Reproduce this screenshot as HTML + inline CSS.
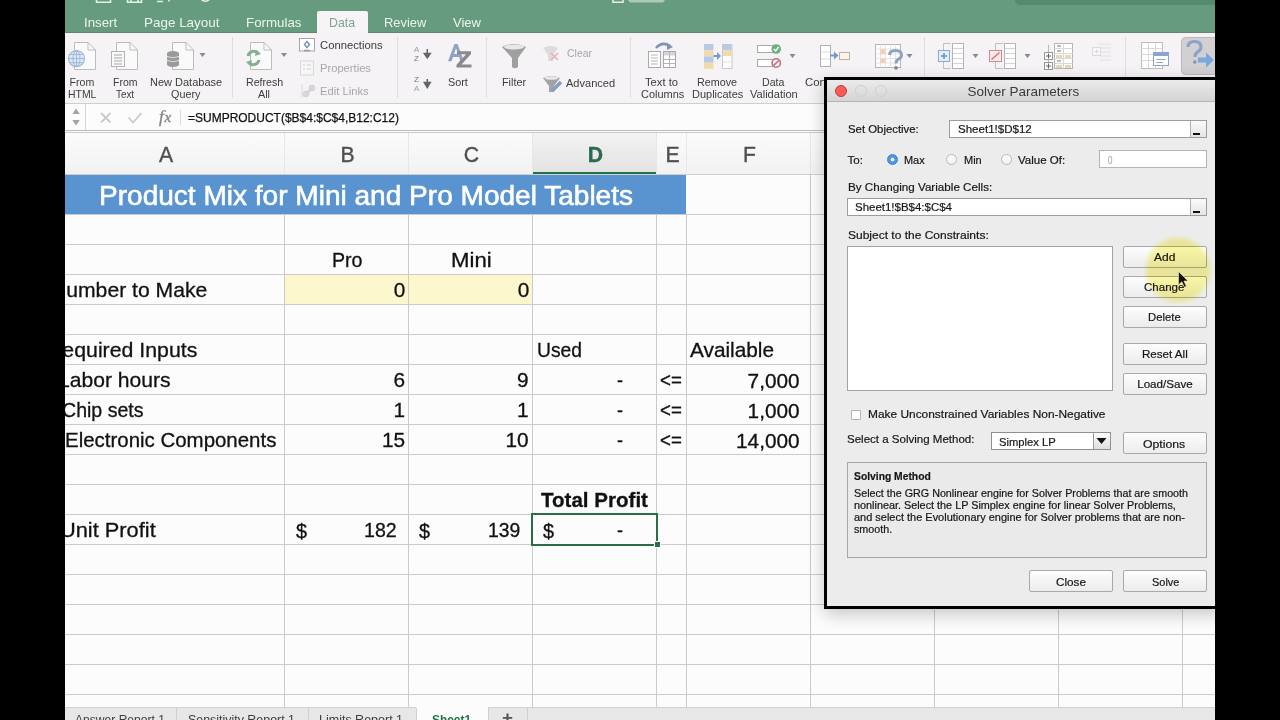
<!DOCTYPE html><html><head><meta charset="utf-8"><title>Solver</title><style>
*{margin:0;padding:0;box-sizing:border-box}
html,body{width:1280px;height:720px;overflow:hidden;background:#000;font-family:"Liberation Sans",sans-serif}
.a{position:absolute}
.t{position:absolute;white-space:nowrap}
</style></head><body>
<div class="a" style="left:65px;top:0px;width:1150px;height:720px;background:#fdfcfd"></div>
<div class="a" style="left:65px;top:0px;width:1150px;height:32px;background:#679b80"></div>
<svg class="a" style="left:65px;top:0px" width="620" height="6" viewBox="0 0 620 6"><g stroke="#e3f0e7" stroke-width="1.6" fill="none"><path d="M31.5 -2V2.2H45.5V-2"/><path d="M62.5 -2V2.2H76.5V-2M66 -2V1.5M73 -2V1.5"/><path d="M92 1.5H98M104 -2V1.5"/><path d="M136 -1Q140 3.5 145 -1"/><path d="M548 -2V2.2H558V-2"/></g><path d="M563 0H600L598 2.5H565Z" fill="#e3f0e7" opacity=".55"/></svg>
<div class="a" style="left:1015px;top:-6px;width:205px;height:11px;background:#578a6d;border-radius:5px"></div>
<div class="a" style="left:317px;top:11px;width:51px;height:22px;background:#f6f4f6;border-radius:2px 2px 0 0"></div>
<div class="t" style="left:84.40px;top:16.00px;font-size:13.00px;line-height:13.00px;color:#eaf6ee;transform:scaleX(1.0185);transform-origin:0 0">Insert</div>
<div class="t" style="left:144.00px;top:16.00px;font-size:13.00px;line-height:13.00px;color:#eaf6ee;transform:scaleX(1.0343);transform-origin:0 0">Page Layout</div>
<div class="t" style="left:246.00px;top:16.00px;font-size:13.00px;line-height:13.00px;color:#eaf6ee;transform:scaleX(1.0238);transform-origin:0 0">Formulas</div>
<div class="t" style="left:329.00px;top:16.00px;font-size:13.00px;line-height:13.00px;color:#7fa490;transform:scaleX(0.9456);transform-origin:0 0">Data</div>
<div class="t" style="left:383.80px;top:16.00px;font-size:13.00px;line-height:13.00px;color:#eaf6ee;transform:scaleX(0.9897);transform-origin:0 0">Review</div>
<div class="t" style="left:453.00px;top:16.00px;font-size:13.00px;line-height:13.00px;color:#eaf6ee">View</div>
<div class="a" style="left:65px;top:32px;width:1150px;height:71px;background:#f5f3f5"></div>
<div class="a" style="left:65px;top:103px;width:1150px;height:1px;background:#cfcdcf"></div>
<div class="a" style="left:65px;top:32px;width:1150px;height:1px;background:#6f7d72"></div>
<div class="a" style="left:65px;top:33px;width:1150px;height:1px;background:#eef6f0"></div>
<div class="a" style="left:317px;top:32px;width:51px;height:3px;background:#f6f4f6"></div>
<div class="a" style="left:232px;top:37px;width:1px;height:61px;background:#dfdddf"></div>
<div class="a" style="left:397px;top:37px;width:1px;height:61px;background:#dfdddf"></div>
<div class="a" style="left:486px;top:37px;width:1px;height:61px;background:#dfdddf"></div>
<div class="a" style="left:630px;top:37px;width:1px;height:61px;background:#dfdddf"></div>
<div class="a" style="left:924px;top:37px;width:1px;height:61px;background:#dfdddf"></div>
<div class="a" style="left:1125px;top:37px;width:1px;height:61px;background:#dfdddf"></div>
<div class="t" style="left:69.50px;top:76.63px;font-size:10.60px;line-height:10.60px;color:#3d3d3d">From</div>
<div class="t" style="left:68.20px;top:88.63px;font-size:10.60px;line-height:10.60px;color:#3d3d3d;transform:scaleX(0.9850);transform-origin:0 0">HTML</div>
<div class="t" style="left:112.70px;top:76.63px;font-size:10.60px;line-height:10.60px;color:#3d3d3d;transform:scaleX(0.9899);transform-origin:0 0">From</div>
<div class="t" style="left:116.40px;top:88.63px;font-size:10.60px;line-height:10.60px;color:#3d3d3d;transform:scaleX(0.9305);transform-origin:0 0">Text</div>
<div class="t" style="left:149.75px;top:76.63px;font-size:10.60px;line-height:10.60px;color:#3d3d3d;transform:scaleX(1.0376);transform-origin:0 0">New Database</div>
<div class="t" style="left:170.60px;top:88.63px;font-size:10.60px;line-height:10.60px;color:#3d3d3d;transform:scaleX(1.0178);transform-origin:0 0">Query</div>
<div class="t" style="left:245.60px;top:76.63px;font-size:10.60px;line-height:10.60px;color:#3d3d3d;transform:scaleX(1.0054);transform-origin:0 0">Refresh</div>
<div class="t" style="left:258.00px;top:88.63px;font-size:10.60px;line-height:10.60px;color:#3d3d3d;transform:scaleX(1.0199);transform-origin:0 0">All</div>
<div class="t" style="left:320.30px;top:40.03px;font-size:10.60px;line-height:10.60px;color:#3d3d3d;transform:scaleX(1.0639);transform-origin:0 0">Connections</div>
<div class="t" style="left:320.30px;top:62.83px;font-size:10.60px;line-height:10.60px;color:#a8a8a8;transform:scaleX(1.0551);transform-origin:0 0">Properties</div>
<div class="t" style="left:320.30px;top:86.03px;font-size:10.60px;line-height:10.60px;color:#a8a8a8;transform:scaleX(1.0598);transform-origin:0 0">Edit Links</div>
<div class="t" style="left:448.30px;top:76.73px;font-size:10.60px;line-height:10.60px;color:#3d3d3d;transform:scaleX(1.0231);transform-origin:0 0">Sort</div>
<div class="t" style="left:501.50px;top:76.93px;font-size:10.60px;line-height:10.60px;color:#3d3d3d;transform:scaleX(1.0199);transform-origin:0 0">Filter</div>
<div class="t" style="left:566.60px;top:47.93px;font-size:10.60px;line-height:10.60px;color:#a8a8a8;transform:scaleX(0.9908);transform-origin:0 0">Clear</div>
<div class="t" style="left:566.00px;top:78.03px;font-size:10.60px;line-height:10.60px;color:#3d3d3d;transform:scaleX(1.0430);transform-origin:0 0">Advanced</div>
<div class="t" style="left:645.40px;top:76.63px;font-size:10.60px;line-height:10.60px;color:#3d3d3d;transform:scaleX(1.0571);transform-origin:0 0">Text to</div>
<div class="t" style="left:640.50px;top:88.63px;font-size:10.60px;line-height:10.60px;color:#3d3d3d;transform:scaleX(1.0355);transform-origin:0 0">Columns</div>
<div class="t" style="left:697.40px;top:76.63px;font-size:10.60px;line-height:10.60px;color:#3d3d3d;transform:scaleX(1.0156);transform-origin:0 0">Remove</div>
<div class="t" style="left:691.80px;top:88.63px;font-size:10.60px;line-height:10.60px;color:#3d3d3d;transform:scaleX(1.0363);transform-origin:0 0">Duplicates</div>
<div class="t" style="left:762.10px;top:76.63px;font-size:10.60px;line-height:10.60px;color:#3d3d3d;transform:scaleX(1.0036);transform-origin:0 0">Data</div>
<div class="t" style="left:749.50px;top:88.63px;font-size:10.60px;line-height:10.60px;color:#3d3d3d;transform:scaleX(1.0439);transform-origin:0 0">Validation</div>
<div class="t" style="left:805.00px;top:76.53px;font-size:10.60px;line-height:10.60px;color:#3d3d3d;transform:scaleX(1.0796);transform-origin:0 0">Con</div>
<svg class="a" style="left:0;top:0" width="1280" height="110" viewBox="0 0 1280 110"><path d="M74.5 42.5 H88.0 L95.5 50.0 V69.5 H74.5 Z" fill="#fbfafb" stroke="#bdbdbd" stroke-width="1"/><path d="M88.0 42.5 V50.0 H95.5" fill="none" stroke="#bdbdbd" stroke-width="1"/><circle cx="76.5" cy="58.6" r="8" fill="#dfe8f5" stroke="#9fb8dc" stroke-width="1.2"/><path d="M68.5 58.6H84.5M76.5 50.6V66.6M70 54.5H83M70 62.7H83" stroke="#9fb8dc" stroke-width="1"/><ellipse cx="76.5" cy="58.6" rx="3.5" ry="8" fill="none" stroke="#9fb8dc" stroke-width="1"/><path d="M116.5 42.5 H130.0 L137.5 50.0 V69.5 H116.5 Z" fill="#fbfafb" stroke="#bdbdbd" stroke-width="1"/><path d="M130.0 42.5 V50.0 H137.5" fill="none" stroke="#bdbdbd" stroke-width="1"/><rect x="111.5" y="51.5" width="13" height="15" fill="#fbfafb" stroke="#b3b3b3"/><path d="M114 55H122M114 58H122M114 61H122M114 64H122" stroke="#a5a5a5" stroke-width="1"/><path d="M172.5 42.5 H186.0 L193.5 50.0 V69.5 H172.5 Z" fill="#fbfafb" stroke="#bdbdbd" stroke-width="1"/><path d="M186.0 42.5 V50.0 H193.5" fill="none" stroke="#bdbdbd" stroke-width="1"/><g fill="#9a9a9a"><ellipse cx="173" cy="53.5" rx="6" ry="2.5"/><rect x="167" y="53.5" width="12" height="3"/><ellipse cx="173" cy="57.5" rx="6" ry="2.5"/><rect x="167" y="57.5" width="12" height="3"/><ellipse cx="173" cy="61.5" rx="6" ry="2.5"/><rect x="167" y="61.5" width="12" height="3"/><ellipse cx="173" cy="64.5" rx="6" ry="2.5"/></g><path d="M167 56.5Q173 59 179 56.5M167 60.5Q173 63 179 60.5" stroke="#eee" stroke-width=".8" fill="none"/><path d="M199.5 53H205.5L202.5 57Z" fill="#8a8a8a"/><path d="M250.5 42.5 H264.0 L271.5 50.0 V69.5 H250.5 Z" fill="#fbfafb" stroke="#bdbdbd" stroke-width="1"/><path d="M264.0 42.5 V50.0 H271.5" fill="none" stroke="#bdbdbd" stroke-width="1"/><path d="M248 56A6 6 0 0 1 258.5 53.5" stroke="#86b08f" stroke-width="3" fill="none"/><path d="M256 50L261 54L255 56Z" fill="#86b08f"/><path d="M259 60A6 6 0 0 1 248.5 62.5" stroke="#86b08f" stroke-width="3" fill="none"/><path d="M251 66L246 62L252 60Z" fill="#86b08f"/><path d="M281 53H287L284 57Z" fill="#8a8a8a"/><rect x="299.5" y="38.5" width="15" height="12.5" fill="#fff" stroke="#a5a5a5"/><path d="M304 50.5H310" stroke="#999" stroke-width="1.5"/><path d="M307 41.5L309.5 44.5L307 47.5L304.5 44.5Z" fill="none" stroke="#7f97bb" stroke-width="1.5"/><rect x="300.5" y="61" width="13" height="14" fill="#f7f6f7" stroke="#d8d8d8"/><path d="M303 65H305M307 65H311M303 69H305M307 69H311" stroke="#d0d0d0" stroke-width="1"/><path d="M302 84V98" stroke="#dcdcdc"/><path d="M305 95L313 87" stroke="#d3d3d3" stroke-width="2.5"/><circle cx="306" cy="94" r="2.5" fill="none" stroke="#d3d3d3" stroke-width="1.5"/><circle cx="312" cy="88" r="2.5" fill="none" stroke="#d3d3d3" stroke-width="1.5"/><text x="414" y="51.7" font-size="8" fill="#8f9fb8" font-family="Liberation Sans">A</text><text x="414" y="60.7" font-size="8" fill="#777" font-family="Liberation Sans">Z</text><path d="M427.3 49V56M424.3 53.5L427.3 58L430.3 53.5Z" stroke="#666" stroke-width="1.5" fill="#666"/><text x="414" y="81.5" font-size="8" fill="#777" font-family="Liberation Sans">Z</text><text x="414" y="90.5" font-size="8" fill="#8f9fb8" font-family="Liberation Sans">A</text><path d="M427.3 79V86M424.3 82.5L427.3 87.5L430.3 82.5Z" stroke="#666" stroke-width="1.5" fill="#666"/><path d="M448 61.2L454.5 44H457.5L464 61.2H460.5L459 57H453L451.5 61.2ZM454 54H458L456 48Z" fill="#8ea3c3"/><path d="M457 51.3H471V54L461.5 64.5H471.5V67.5H456.5V64.8L466 54.3H457Z" fill="#8a8a8a"/><path d="M502 47Q514 41 526 47L518 58V67Q515 69.5 512 67V58Z" fill="#a0a0a0"/><ellipse cx="514" cy="47" rx="10" ry="2.6" fill="#e8e8e8"/><path d="M543 48Q550.5 44 558 48L553 55V61H548V55Z" fill="#dcdcdc"/><path d="M551 53L558 60M558 53L551 60" stroke="#eab0b0" stroke-width="1.6"/><path d="M543 78Q551.5 74 560 78L554 86V92H549V86Z" fill="#a3a3a3"/><ellipse cx="551.5" cy="78" rx="7" ry="1.8" fill="#e6e6e6"/><path d="M552 91L561 82" stroke="#7fa0cf" stroke-width="3.5"/><path d="M656 48Q662 41 670 46" stroke="#7f93b5" stroke-width="2.5" fill="none"/><path d="M667 43L673 47L667 50Z" fill="#7f93b5"/><rect x="648.5" y="51.5" width="12" height="16" fill="#fff" stroke="#a9a9a9"/><path d="M651 55H658M651 58H658M651 61H658M651 64H658" stroke="#b5b5b5"/><rect x="663.5" y="51.5" width="12" height="16" fill="#fff" stroke="#a9a9a9"/><rect x="664" y="52" width="11" height="3.5" fill="#d5d5d5"/><path d="M669.5 52V67M664 59.5H675M664 63.5H675" stroke="#b5b5b5"/><rect x="704" y="44" width="9.5" height="6.2" fill="#b7c9e6"/><rect x="704" y="50.2" width="9.5" height="6.2" fill="#f0dca8"/><rect x="704" y="56.4" width="9.5" height="6.2" fill="#b7c9e6"/><rect x="704" y="62.6" width="9.5" height="6.2" fill="#f0dca8"/><path d="M713.5 56H718" stroke="#6f9bd3" stroke-width="2"/><path d="M717 52L721 56L717 60Z" fill="#6f9bd3"/><rect x="722.5" y="44.5" width="9.5" height="24" fill="#fff" stroke="#c8c8c8"/><rect x="723" y="45" width="8.5" height="5.5" fill="#b7c9e6"/><rect x="723" y="50.5" width="8.5" height="5.5" fill="#f0dca8"/><path d="M723 62H731.5" stroke="#e0e0e0"/><rect x="757.5" y="45.5" width="18" height="7" fill="#fff" stroke="#aaa"/><circle cx="776.2" cy="49" r="4.8" fill="#6fb07a"/><path d="M773.8 49L775.6 51L778.6 47" stroke="#fff" stroke-width="1.3" fill="none"/><rect x="757.5" y="59.5" width="18" height="7" fill="#fff" stroke="#aaa"/><circle cx="776.2" cy="63" r="4.2" fill="#fff" stroke="#c76b7c" stroke-width="1.6"/><path d="M773.6 65.4L778.8 60.6" stroke="#c76b7c" stroke-width="1.5"/><path d="M789.5 54H795.5L792.5 58Z" fill="#8a8a8a"/><rect x="820.5" y="45.5" width="10" height="21" fill="#fff" stroke="#b0b0b0"/><path d="M821 52H830M821 59H830" stroke="#ddd"/><path d="M830 55.5H835" stroke="#7099cf" stroke-width="2"/><path d="M834 51.5L838.5 55.5L834 59.5Z" fill="#7099cf"/><rect x="839.5" y="52.5" width="10" height="7" fill="#fdf3ea" stroke="#c0b0a0"/><rect x="875.5" y="44.5" width="25" height="23" fill="#fff" stroke="#b5b5b5"/><path d="M880.5 44.5V67.5M885.5 44.5V67.5M890.5 44.5V67.5M895.5 44.5V67.5M875.5 49H900.5M875.5 54H900.5M875.5 58.5H900.5M875.5 63H900.5" stroke="#dedede" stroke-width=".8"/><rect x="880.5" y="49" width="5" height="5" fill="#f3d0b5"/><rect x="880.5" y="58.5" width="5" height="4.5" fill="#f3d0b5"/><path d="M889.5 55Q889.5 50.5 895.5 50.5Q901.5 50.5 901.5 55Q901.5 58 898 59.5Q896 60.5 896 63.5" stroke="#8ea3c3" stroke-width="3" fill="none"/><circle cx="896" cy="67.8" r="1.9" fill="#8a8a8a"/><path d="M906.5 54H912.5L909.5 58Z" fill="#8a8a8a"/><path d="M943.5 43.5V68.5H950.5" fill="none" stroke="#c0c0c0"/><path d="M943.5 43.5H950.5" stroke="#c0c0c0"/><rect x="952.5" y="43.5" width="11" height="25" fill="#fff" stroke="#b5b5b5"/><path d="M953 48.5H963M953 53.5H963M953 58.5H963M953 63.5H963" stroke="#d5d5d5"/><rect x="938.5" y="50.5" width="11" height="11" fill="#e3eefa" stroke="#89a9d3"/><path d="M944 53V59M941 56H947" stroke="#6e92c5" stroke-width="1.5"/><path d="M972.5 54H978.5L975.5 58Z" fill="#8a8a8a"/><path d="M995.5 43.5V68.5H1003" fill="none" stroke="#c0c0c0"/><path d="M995.5 43.5H1003" stroke="#c0c0c0"/><rect x="1004.5" y="43.5" width="11" height="25" fill="#fff" stroke="#b5b5b5"/><path d="M1005 48.5H1015M1005 53.5H1015M1005 58.5H1015M1005 63.5H1015" stroke="#d5d5d5"/><rect x="989.5" y="50.5" width="12" height="11" fill="#fbeaea" stroke="#d58a8a"/><path d="M991.5 59.5L999.5 52.5" stroke="#d06b6b" stroke-width="1.3"/><path d="M1024.5 54H1030.5L1027.5 58Z" fill="#8a8a8a"/><rect x="1054.5" y="43.5" width="18" height="25" fill="#fff" stroke="#b5b5b5"/><path d="M1063.5 43.5V68.5M1054.5 48.5H1072.5M1054.5 53.5H1072.5M1054.5 58.5H1072.5M1054.5 63.5H1072.5" stroke="#d8d8d8"/><path d="M1057 46H1061M1057 51H1061M1057 61H1061" stroke="#777" stroke-width="1"/><rect x="1056" y="55" width="6" height="3" fill="#e8d6b8"/><rect x="1065" y="55" width="6" height="3" fill="#e8d6b8"/><rect x="1056" y="65" width="6" height="3" fill="#e8d6b8"/><rect x="1065" y="65" width="6" height="3" fill="#e8d6b8"/><path d="M1048.5 45V52M1048.5 59V62" stroke="#bbb"/><rect x="1044.5" y="52.5" width="8" height="7" fill="#fff" stroke="#999"/><rect x="1044.5" y="62.5" width="8" height="7" fill="#fff" stroke="#999"/><path d="M1046 56H1051M1048.5 53.5V58.5M1046 66H1051M1048.5 63.5V68.5" stroke="#666"/><path d="M1098 44H1111M1100 48H1111M1100 52H1111M1100 56H1111M1100 60H1111" stroke="#e2e2e2"/><rect x="1092.5" y="47.5" width="8" height="8" fill="#f8f8f8" stroke="#dadada"/><path d="M1094.5 51.5H1098.5M1096.5 49.5V53.5" stroke="#d5d5d5"/><rect x="1141.5" y="42.5" width="21" height="26" fill="#fff" stroke="#bdbdbd"/><path d="M1141.5 48.5H1162.5M1141.5 54.5H1162.5M1141.5 60.5H1162.5M1148.5 42.5V68.5M1155.5 42.5V68.5" stroke="#d8d8d8"/><rect x="1153.5" y="52.5" width="15" height="13" fill="#fff" stroke="#8aa6cf"/><rect x="1154" y="53" width="14" height="3" fill="#8aa6cf"/><path d="M1156.5 59.5H1165.5M1156.5 62.5H1163" stroke="#8aa6cf"/><rect x="1181.5" y="37.5" width="40" height="37" rx="4" fill="#d3d0d3" stroke="#bbb8bb"/><path d="M1188 47Q1188 41.5 1194.5 41.5Q1201 41.5 1201 47Q1201 50 1197.5 52Q1195 53.5 1195 57" stroke="#8ba4ca" stroke-width="3.2" fill="none"/><circle cx="1194.8" cy="62" r="1.8" fill="#8f92a8"/><path d="M1198 57.5H1206V52.5L1214 60L1206 67.5V62.5H1198Z" fill="#78a8e0"/></svg>
<div class="a" style="left:65px;top:104px;width:1150px;height:26px;background:#fdfcfd"></div>
<div class="a" style="left:65px;top:130px;width:1150px;height:1px;background:#bcbcbc"></div>
<div class="a" style="left:65px;top:132px;width:1150px;height:1px;background:#cbcbcb"></div>
<div class="a" style="left:85px;top:104px;width:1px;height:26px;background:#d3d3d3"></div>
<svg class="a" style="left:65px;top:103px" width="120" height="28" viewBox="0 0 120 28"><path d="M7.4 11L11 5.5L14.8 11Z" fill="#a5a5a5"/><path d="M7.4 17L11 22.5L14.8 17Z" fill="#a5a5a5"/><path d="M36 10L45.5 19.5M45.5 10L36 19.5" stroke="#c9c9c9" stroke-width="1.8"/><path d="M63.5 14.5L68 19.5L76.5 10" stroke="#c9c9c9" stroke-width="1.8" fill="none"/><text x="94" y="18.8" font-family="Liberation Serif" font-style="italic" font-size="17" fill="#858585" stroke="#858585" stroke-width=".35">f</text><text x="99.5" y="18.8" font-family="Liberation Serif" font-style="italic" font-size="15" fill="#858585" stroke="#858585" stroke-width=".35">x</text></svg>
<div class="a" style="left:180px;top:110px;width:1px;height:15px;background:#dadada"></div>
<div class="t" style="left:188.00px;top:112.13px;font-size:12.60px;line-height:12.60px;color:#111;transform:scaleX(0.9520);transform-origin:0 0;-webkit-text-stroke:0.25px #111">=SUMPRODUCT($B$4:$C$4,B12:C12)</div>
<div class="a" style="left:65px;top:133px;width:1150px;height:41px;background:linear-gradient(#fcfbfc,#f3f2f3)"></div>
<div class="a" style="left:532px;top:133px;width:124px;height:41px;background:linear-gradient(#f4f3f4,#e3e2e3)"></div>
<div class="a" style="left:532px;top:172px;width:124px;height:2px;background:#217346"></div>
<div class="t" style="left:45px;top:143px;width:239px;text-align:center;font-size:21.2px;padding-left:3px;line-height:24px;-webkit-text-stroke:0.35px currentColor;color:#4f4f4f">A</div>
<div class="t" style="left:284px;top:143px;width:124px;text-align:center;font-size:21.2px;padding-left:3px;line-height:24px;-webkit-text-stroke:0.35px currentColor;color:#4f4f4f">B</div>
<div class="t" style="left:408px;top:143px;width:124px;text-align:center;font-size:21.2px;padding-left:3px;line-height:24px;-webkit-text-stroke:0.35px currentColor;color:#4f4f4f">C</div>
<div class="t" style="left:532px;top:143px;width:124px;text-align:center;font-size:21.2px;padding-left:3px;line-height:24px;-webkit-text-stroke:0.35px currentColor;color:#2a6b4f;font-weight:bold">D</div>
<div class="t" style="left:656px;top:143px;width:30px;text-align:center;font-size:21.2px;padding-left:3px;line-height:24px;-webkit-text-stroke:0.35px currentColor;color:#4f4f4f">E</div>
<div class="t" style="left:686px;top:143px;width:124px;text-align:center;font-size:21.2px;padding-left:3px;line-height:24px;-webkit-text-stroke:0.35px currentColor;color:#4f4f4f">F</div>
<div class="t" style="left:810px;top:143px;width:124px;text-align:center;font-size:21.2px;padding-left:3px;line-height:24px;-webkit-text-stroke:0.35px currentColor;color:#4f4f4f">G</div>
<div class="t" style="left:934px;top:143px;width:124px;text-align:center;font-size:21.2px;padding-left:3px;line-height:24px;-webkit-text-stroke:0.35px currentColor;color:#4f4f4f">H</div>
<div class="t" style="left:1058px;top:143px;width:124px;text-align:center;font-size:21.2px;padding-left:3px;line-height:24px;-webkit-text-stroke:0.35px currentColor;color:#4f4f4f">I</div>
<div class="t" style="left:1182px;top:143px;width:124px;text-align:center;font-size:21.2px;padding-left:3px;line-height:24px;-webkit-text-stroke:0.35px currentColor;color:#4f4f4f">J</div>
<div class="a" style="left:284px;top:133px;width:1px;height:41px;background:#e9e7e9"></div>
<div class="a" style="left:408px;top:133px;width:1px;height:41px;background:#e9e7e9"></div>
<div class="a" style="left:532px;top:133px;width:1px;height:41px;background:#e9e7e9"></div>
<div class="a" style="left:656px;top:133px;width:1px;height:41px;background:#e9e7e9"></div>
<div class="a" style="left:686px;top:133px;width:1px;height:41px;background:#e9e7e9"></div>
<div class="a" style="left:810px;top:133px;width:1px;height:41px;background:#e9e7e9"></div>
<div class="a" style="left:934px;top:133px;width:1px;height:41px;background:#e9e7e9"></div>
<div class="a" style="left:1058px;top:133px;width:1px;height:41px;background:#e9e7e9"></div>
<div class="a" style="left:1182px;top:133px;width:1px;height:41px;background:#e9e7e9"></div>
<div class="a" style="left:65px;top:174px;width:1150px;height:1px;background:#cfcfcf"></div>
<div class="a" style="left:65px;top:214px;width:1150px;height:1px;background:#cccacd"></div>
<div class="a" style="left:65px;top:244px;width:1150px;height:1px;background:#cccacd"></div>
<div class="a" style="left:65px;top:274px;width:1150px;height:1px;background:#cccacd"></div>
<div class="a" style="left:65px;top:304px;width:1150px;height:1px;background:#cccacd"></div>
<div class="a" style="left:65px;top:334px;width:1150px;height:1px;background:#cccacd"></div>
<div class="a" style="left:65px;top:364px;width:1150px;height:1px;background:#cccacd"></div>
<div class="a" style="left:65px;top:394px;width:1150px;height:1px;background:#cccacd"></div>
<div class="a" style="left:65px;top:424px;width:1150px;height:1px;background:#cccacd"></div>
<div class="a" style="left:65px;top:454px;width:1150px;height:1px;background:#cccacd"></div>
<div class="a" style="left:65px;top:484px;width:1150px;height:1px;background:#cccacd"></div>
<div class="a" style="left:65px;top:514px;width:1150px;height:1px;background:#cccacd"></div>
<div class="a" style="left:65px;top:544px;width:1150px;height:1px;background:#cccacd"></div>
<div class="a" style="left:65px;top:574px;width:1150px;height:1px;background:#cccacd"></div>
<div class="a" style="left:65px;top:604px;width:1150px;height:1px;background:#cccacd"></div>
<div class="a" style="left:65px;top:634px;width:1150px;height:1px;background:#cccacd"></div>
<div class="a" style="left:65px;top:664px;width:1150px;height:1px;background:#cccacd"></div>
<div class="a" style="left:65px;top:694px;width:1150px;height:1px;background:#cccacd"></div>
<div class="a" style="left:284px;top:214px;width:1px;height:493px;background:#cccacd"></div>
<div class="a" style="left:408px;top:214px;width:1px;height:493px;background:#cccacd"></div>
<div class="a" style="left:532px;top:214px;width:1px;height:493px;background:#cccacd"></div>
<div class="a" style="left:656px;top:214px;width:1px;height:493px;background:#cccacd"></div>
<div class="a" style="left:686px;top:214px;width:1px;height:493px;background:#cccacd"></div>
<div class="a" style="left:810px;top:214px;width:1px;height:493px;background:#cccacd"></div>
<div class="a" style="left:934px;top:214px;width:1px;height:493px;background:#cccacd"></div>
<div class="a" style="left:1058px;top:214px;width:1px;height:493px;background:#cccacd"></div>
<div class="a" style="left:1182px;top:214px;width:1px;height:493px;background:#cccacd"></div>
<div class="a" style="left:810px;top:174px;width:1px;height:40px;background:#cccacd"></div>
<div class="a" style="left:934px;top:174px;width:1px;height:40px;background:#cccacd"></div>
<div class="a" style="left:1058px;top:174px;width:1px;height:40px;background:#cccacd"></div>
<div class="a" style="left:1182px;top:174px;width:1px;height:40px;background:#cccacd"></div>
<div class="a" style="left:65px;top:175px;width:621px;height:39px;background:#5994d0"></div>
<div class="t" style="left:99.00px;top:182.22px;font-size:27.50px;line-height:27.50px;color:#ffffff;transform:scaleX(1.0196);transform-origin:0 0;-webkit-text-stroke:0.6px #fff">Product Mix for Mini and Pro Model Tablets</div>
<div class="a" style="left:285px;top:275px;width:123px;height:29px;background:#fdf7cd"></div>
<div class="a" style="left:409px;top:275px;width:123px;height:29px;background:#fdf7cd"></div>
<div class="t" style="left:331.80px;top:250.29px;font-size:20.80px;line-height:20.80px;color:#111;transform:scaleX(0.9430);transform-origin:0 0;-webkit-text-stroke:0.3px #111">Pro</div>
<div class="t" style="left:451.20px;top:250.29px;font-size:20.80px;line-height:20.80px;color:#111;transform:scaleX(1.0663);transform-origin:0 0;-webkit-text-stroke:0.3px #111">Mini</div>
<div class="t" style="left:393.76px;top:280.29px;font-size:20.80px;line-height:20.80px;color:#111;-webkit-text-stroke:0.3px #111">0</div>
<div class="t" style="left:517.66px;top:280.29px;font-size:20.80px;line-height:20.80px;color:#111;-webkit-text-stroke:0.3px #111">0</div>
<div class="t" style="left:51.08px;top:279.79px;font-size:20.80px;line-height:20.80px;color:#111;transform:scaleX(1.0163);transform-origin:0 0;-webkit-text-stroke:0.3px #111">Number to Make</div>
<div class="t" style="left:46.50px;top:339.79px;font-size:20.80px;line-height:20.80px;color:#111;transform:scaleX(1.0235);transform-origin:0 0;-webkit-text-stroke:0.3px #111">Required Inputs</div>
<div class="t" style="left:536.70px;top:339.79px;font-size:20.80px;line-height:20.80px;color:#111;transform:scaleX(0.9265);transform-origin:0 0;-webkit-text-stroke:0.3px #111">Used</div>
<div class="t" style="left:690.00px;top:339.79px;font-size:20.80px;line-height:20.80px;color:#111;-webkit-text-stroke:0.3px #111">Available</div>
<div class="t" style="left:57.78px;top:369.79px;font-size:20.80px;line-height:20.80px;color:#111;transform:scaleX(1.0148);transform-origin:0 0;-webkit-text-stroke:0.3px #111">Labor hours</div>
<div class="t" style="left:393.46px;top:369.79px;font-size:20.80px;line-height:20.80px;color:#111;-webkit-text-stroke:0.3px #111">6</div>
<div class="t" style="left:517.06px;top:369.79px;font-size:20.80px;line-height:20.80px;color:#111;-webkit-text-stroke:0.3px #111">9</div>
<div class="t" style="left:616.70px;top:369.79px;font-size:20.80px;line-height:20.80px;color:#111;transform:scaleX(0.8611);transform-origin:0 0;-webkit-text-stroke:0.3px #111">-</div>
<div class="t" style="left:660.30px;top:369.79px;font-size:20.80px;line-height:20.80px;color:#111;transform:scaleX(0.8999);transform-origin:0 0;-webkit-text-stroke:0.3px #111">&lt;=</div>
<div class="t" style="left:747.60px;top:370.79px;font-size:20.80px;line-height:20.80px;color:#111;-webkit-text-stroke:0.3px #111">7,000</div>
<div class="t" style="left:61.82px;top:399.79px;font-size:20.80px;line-height:20.80px;color:#111;transform:scaleX(0.9406);transform-origin:0 0;-webkit-text-stroke:0.3px #111">Chip sets</div>
<div class="t" style="left:393.46px;top:399.79px;font-size:20.80px;line-height:20.80px;color:#111;-webkit-text-stroke:0.3px #111">1</div>
<div class="t" style="left:517.06px;top:399.79px;font-size:20.80px;line-height:20.80px;color:#111;-webkit-text-stroke:0.3px #111">1</div>
<div class="t" style="left:616.70px;top:399.79px;font-size:20.80px;line-height:20.80px;color:#111;transform:scaleX(0.8611);transform-origin:0 0;-webkit-text-stroke:0.3px #111">-</div>
<div class="t" style="left:660.30px;top:399.79px;font-size:20.80px;line-height:20.80px;color:#111;transform:scaleX(0.8999);transform-origin:0 0;-webkit-text-stroke:0.3px #111">&lt;=</div>
<div class="t" style="left:747.60px;top:400.79px;font-size:20.80px;line-height:20.80px;color:#111;-webkit-text-stroke:0.3px #111">1,000</div>
<div class="t" style="left:65.05px;top:429.79px;font-size:20.80px;line-height:20.80px;color:#111;transform:scaleX(0.9832);transform-origin:0 0;-webkit-text-stroke:0.3px #111">Electronic Components</div>
<div class="t" style="left:381.91px;top:429.79px;font-size:20.80px;line-height:20.80px;color:#111;-webkit-text-stroke:0.3px #111">15</div>
<div class="t" style="left:505.51px;top:429.79px;font-size:20.80px;line-height:20.80px;color:#111;-webkit-text-stroke:0.3px #111">10</div>
<div class="t" style="left:616.70px;top:429.79px;font-size:20.80px;line-height:20.80px;color:#111;transform:scaleX(0.8611);transform-origin:0 0;-webkit-text-stroke:0.3px #111">-</div>
<div class="t" style="left:660.30px;top:429.79px;font-size:20.80px;line-height:20.80px;color:#111;transform:scaleX(0.8999);transform-origin:0 0;-webkit-text-stroke:0.3px #111">&lt;=</div>
<div class="t" style="left:736.05px;top:430.79px;font-size:20.80px;line-height:20.80px;color:#111;-webkit-text-stroke:0.3px #111">14,000</div>
<div class="t" style="left:541.00px;top:489.79px;font-size:20.80px;line-height:20.80px;color:#111;font-weight:bold;transform:scaleX(0.9883);transform-origin:0 0;-webkit-text-stroke:0.3px #111">Total Profit</div>
<div class="t" style="left:60.31px;top:519.79px;font-size:20.80px;line-height:20.80px;color:#111;transform:scaleX(1.0480);transform-origin:0 0;-webkit-text-stroke:0.3px #111">Unit Profit</div>
<div class="t" style="left:295.70px;top:520.79px;font-size:20.80px;line-height:20.80px;color:#111;transform:scaleX(0.9529);transform-origin:0 0;-webkit-text-stroke:0.3px #111">$</div>
<div class="t" style="left:364.00px;top:519.79px;font-size:20.80px;line-height:20.80px;color:#111;transform:scaleX(0.9414);transform-origin:0 0;-webkit-text-stroke:0.3px #111">182</div>
<div class="t" style="left:419.00px;top:520.79px;font-size:20.80px;line-height:20.80px;color:#111;transform:scaleX(0.9529);transform-origin:0 0;-webkit-text-stroke:0.3px #111">$</div>
<div class="t" style="left:488.00px;top:519.79px;font-size:20.80px;line-height:20.80px;color:#111;transform:scaleX(0.9299);transform-origin:0 0;-webkit-text-stroke:0.3px #111">139</div>
<div class="t" style="left:542.80px;top:520.79px;font-size:20.80px;line-height:20.80px;color:#111;transform:scaleX(0.9529);transform-origin:0 0;-webkit-text-stroke:0.3px #111">$</div>
<div class="t" style="left:616.70px;top:519.79px;font-size:20.80px;line-height:20.80px;color:#111;transform:scaleX(0.8611);transform-origin:0 0;-webkit-text-stroke:0.3px #111">-</div>
<div class="a" style="left:531px;top:513px;width:127px;height:33px;border:2px solid #2a6e49"></div>
<div class="a" style="left:654px;top:541px;width:7px;height:7px;background:#2a6e49;border:1px solid #fff"></div>
<div class="a" style="left:65px;top:707px;width:1150px;height:13px;background:#e8e7e8;border-top:1px solid #d2d2d2"></div>
<div class="a" style="left:416px;top:707px;width:72px;height:13px;background:#fdfcfd"></div>
<div class="a" style="left:176px;top:708px;width:1px;height:12px;background:#d0d0d0"></div>
<div class="a" style="left:308px;top:708px;width:1px;height:12px;background:#d0d0d0"></div>
<div class="a" style="left:416px;top:708px;width:1px;height:12px;background:#d0d0d0"></div>
<div class="a" style="left:488px;top:708px;width:1px;height:12px;background:#d0d0d0"></div>
<div class="a" style="left:527px;top:708px;width:1px;height:12px;background:#d0d0d0"></div>
<div class="t" style="left:75.00px;top:714.42px;font-size:12.50px;line-height:12.50px;color:#3d3d3d;transform:scaleX(0.9664);transform-origin:0 0">Answer Report 1</div>
<div class="t" style="left:188.00px;top:714.42px;font-size:12.50px;line-height:12.50px;color:#3d3d3d;transform:scaleX(0.9936);transform-origin:0 0">Sensitivity Report 1</div>
<div class="t" style="left:319.00px;top:714.42px;font-size:12.50px;line-height:12.50px;color:#3d3d3d">Limits Report 1</div>
<div class="t" style="left:432.00px;top:714.42px;font-size:12.50px;line-height:12.50px;color:#217346;font-weight:bold;transform:scaleX(0.9512);transform-origin:0 0">Sheet1</div>
<div class="t" style="left:502.00px;top:710.46px;font-size:16.00px;line-height:16.00px;color:#555;font-weight:bold;transform:scaleX(1.1752);transform-origin:0 0">+</div>
<div class="a" style="left:824px;top:77px;width:400px;height:532px;background:#000;box-shadow:0 5px 16px rgba(0,0,0,.22)"></div>
<div class="a" style="left:827px;top:80px;width:400px;height:526px;background:#ececec"></div>
<div class="a" style="left:827px;top:80px;width:400px;height:22px;background:linear-gradient(#ebebeb,#d4d4d4);border-bottom:1px solid #b4b4b4"></div>
<div class="a" style="left:835px;top:85px;width:12px;height:12px;border-radius:6px;background:#fc5a55;border:1px solid #b8403c"></div>
<div class="a" style="left:855px;top:85px;width:12px;height:12px;border-radius:6px;border:1px solid #cfcfcf"></div>
<div class="a" style="left:875px;top:85px;width:12px;height:12px;border-radius:6px;border:1px solid #cfcfcf"></div>
<div class="t" style="left:967.50px;top:84.57px;font-size:13.50px;line-height:13.50px;color:#3a3a3a">Solver Parameters</div>
<div class="t" style="left:847.50px;top:123.38px;font-size:11.60px;line-height:11.60px;color:#161616;transform:scaleX(0.9805);transform-origin:0 0;-webkit-text-stroke:0.2px #161616">Set Objective:</div>
<div class="a" style="left:949px;top:120px;width:258px;height:18px;background:#fff;border:1px solid #9d9d9d"></div>
<div class="t" style="left:957.50px;top:123.38px;font-size:11.60px;line-height:11.60px;color:#161616;transform:scaleX(0.9949);transform-origin:0 0;-webkit-text-stroke:0.2px #161616">Sheet1!$D$12</div>
<div class="a" style="left:1190px;top:121px;width:16px;height:16px;background:linear-gradient(#fbfbfb,#e4e4e4);border-left:1px solid #b0b0b0"></div>
<div class="a" style="left:1193px;top:133px;width:7px;height:2px;background:#111"></div>
<div class="t" style="left:847.50px;top:154.38px;font-size:11.60px;line-height:11.60px;color:#161616;-webkit-text-stroke:0.2px #161616">To:</div>
<div class="a" style="left:886.5px;top:153.5px;width:11px;height:11px;border-radius:6px;background:radial-gradient(#fff 0 1.6px,#4d96ea 2.2px);border:1px solid #3d7fd6"></div>
<div class="t" style="left:904.30px;top:154.38px;font-size:11.60px;line-height:11.60px;color:#161616;transform:scaleX(0.9442);transform-origin:0 0;-webkit-text-stroke:0.2px #161616">Max</div>
<div class="a" style="left:946px;top:153.5px;width:11px;height:11px;border-radius:6px;background:linear-gradient(#fff,#f1f1f1);border:1px solid #b9b9b9"></div>
<div class="t" style="left:964.30px;top:154.38px;font-size:11.60px;line-height:11.60px;color:#161616;transform:scaleX(0.9477);transform-origin:0 0;-webkit-text-stroke:0.2px #161616">Min</div>
<div class="a" style="left:1000.5px;top:153.5px;width:11px;height:11px;border-radius:6px;background:linear-gradient(#fff,#f1f1f1);border:1px solid #b9b9b9"></div>
<div class="t" style="left:1018.30px;top:154.38px;font-size:11.60px;line-height:11.60px;color:#161616;transform:scaleX(0.9936);transform-origin:0 0;-webkit-text-stroke:0.2px #161616">Value Of:</div>
<div class="a" style="left:1099px;top:150px;width:108px;height:18px;background:#fff;border:1px solid #b5b5b5"></div>
<div class="t" style="left:1108.00px;top:154.38px;font-size:11.60px;line-height:11.60px;color:#9a9a9a;transform:scaleX(0.6990);transform-origin:0 0">0</div>
<div class="t" style="left:847.50px;top:180.98px;font-size:11.60px;line-height:11.60px;color:#161616;transform:scaleX(1.0052);transform-origin:0 0;-webkit-text-stroke:0.2px #161616">By Changing Variable Cells:</div>
<div class="a" style="left:847px;top:198px;width:360px;height:18px;background:#fff;border:1px solid #9d9d9d"></div>
<div class="t" style="left:855.00px;top:201.48px;font-size:11.60px;line-height:11.60px;color:#161616;transform:scaleX(0.9896);transform-origin:0 0;-webkit-text-stroke:0.2px #161616">Sheet1!$B$4:$C$4</div>
<div class="a" style="left:1190px;top:199px;width:16px;height:16px;background:linear-gradient(#fbfbfb,#e4e4e4);border-left:1px solid #b0b0b0"></div>
<div class="a" style="left:1193px;top:211px;width:7px;height:2px;background:#111"></div>
<div class="t" style="left:847.50px;top:228.98px;font-size:11.60px;line-height:11.60px;color:#161616;transform:scaleX(1.0348);transform-origin:0 0;-webkit-text-stroke:0.2px #161616">Subject to the Constraints:</div>
<div class="a" style="left:847px;top:246px;width:266px;height:145px;background:#fff;border:1px solid #a3a3a3"></div>
<div class="a" style="left:1123px;top:246px;width:84px;height:22px;background:linear-gradient(#fdfdfd,#ececec);border:1px solid #a9a9a9;border-radius:2px"></div>
<div class="t" style="left:1154.20px;top:251.18px;font-size:11.60px;line-height:11.60px;color:#161616;transform:scaleX(1.0364);transform-origin:0 0;-webkit-text-stroke:0.2px #161616">Add</div>
<div class="a" style="left:1123px;top:276px;width:84px;height:22px;background:linear-gradient(#fdfdfd,#ececec);border:1px solid #a9a9a9;border-radius:2px"></div>
<div class="t" style="left:1144.00px;top:281.18px;font-size:11.60px;line-height:11.60px;color:#161616;transform:scaleX(0.9961);transform-origin:0 0;-webkit-text-stroke:0.2px #161616">Change</div>
<div class="a" style="left:1123px;top:306px;width:84px;height:22px;background:linear-gradient(#fdfdfd,#ececec);border:1px solid #a9a9a9;border-radius:2px"></div>
<div class="t" style="left:1148.00px;top:311.18px;font-size:11.60px;line-height:11.60px;color:#161616;transform:scaleX(0.9754);transform-origin:0 0;-webkit-text-stroke:0.2px #161616">Delete</div>
<div class="a" style="left:1123px;top:343px;width:84px;height:22px;background:linear-gradient(#fdfdfd,#ececec);border:1px solid #a9a9a9;border-radius:2px"></div>
<div class="t" style="left:1142.00px;top:348.18px;font-size:11.60px;line-height:11.60px;color:#161616;-webkit-text-stroke:0.2px #161616">Reset All</div>
<div class="a" style="left:1123px;top:373px;width:84px;height:22px;background:linear-gradient(#fdfdfd,#ececec);border:1px solid #a9a9a9;border-radius:2px"></div>
<div class="t" style="left:1137.20px;top:378.18px;font-size:11.60px;line-height:11.60px;color:#161616;-webkit-text-stroke:0.2px #161616">Load/Save</div>
<div class="a" style="left:851px;top:410px;width:10px;height:10px;background:#fff;border:1px solid #b3b3b3;border-radius:1px"></div>
<div class="t" style="left:868.00px;top:407.58px;font-size:11.60px;line-height:11.60px;color:#161616;transform:scaleX(1.0275);transform-origin:0 0;-webkit-text-stroke:0.2px #161616">Make Unconstrained Variables Non-Negative</div>
<div class="t" style="left:847.20px;top:433.48px;font-size:11.60px;line-height:11.60px;color:#161616;transform:scaleX(0.9938);transform-origin:0 0;-webkit-text-stroke:0.2px #161616">Select a Solving Method:</div>
<div class="a" style="left:991px;top:432px;width:120px;height:18px;background:#fff;border:1px solid #8f8f8f"></div>
<div class="t" style="left:999.30px;top:435.78px;font-size:11.60px;line-height:11.60px;color:#161616;transform:scaleX(0.9660);transform-origin:0 0;-webkit-text-stroke:0.2px #161616">Simplex LP</div>
<div class="a" style="left:1093px;top:433px;width:17px;height:16px;background:linear-gradient(#fbfbfb,#dedede);border-left:1px solid #9a9a9a"></div>
<svg class="a" style="left:1093px;top:433px" width="17" height="16" viewBox="0 0 17 16"><path d="M3.5 5H13.5L8.5 11Z" fill="#111"/></svg>
<div class="a" style="left:1123px;top:432px;width:84px;height:22px;background:linear-gradient(#fdfdfd,#ececec);border:1px solid #a9a9a9;border-radius:2px"></div>
<div class="t" style="left:1143.00px;top:438.18px;font-size:11.60px;line-height:11.60px;color:#161616;transform:scaleX(1.0560);transform-origin:0 0;-webkit-text-stroke:0.2px #161616">Options</div>
<div class="a" style="left:847px;top:462px;width:360px;height:96px;background:#ebeaeb;border:1px solid #a9a9a9"></div>
<div class="t" style="left:854.40px;top:471.36px;font-size:10.80px;line-height:10.80px;color:#161616;font-weight:bold;transform:scaleX(0.9552);transform-origin:0 0;-webkit-text-stroke:0.2px #161616">Solving Method</div>
<div class="t" style="left:854.40px;top:488.23px;font-size:10.60px;line-height:10.60px;color:#161616;transform:scaleX(1.0130);transform-origin:0 0;-webkit-text-stroke:0.2px #161616">Select the GRG Nonlinear engine for Solver Problems that are smooth</div>
<div class="t" style="left:854.40px;top:499.93px;font-size:10.60px;line-height:10.60px;color:#161616;transform:scaleX(1.0221);transform-origin:0 0;-webkit-text-stroke:0.2px #161616">nonlinear. Select the LP Simplex engine for linear Solver Problems,</div>
<div class="t" style="left:854.40px;top:511.73px;font-size:10.60px;line-height:10.60px;color:#161616;transform:scaleX(1.0351);transform-origin:0 0;-webkit-text-stroke:0.2px #161616">and select the Evolutionary engine for Solver problems that are non-</div>
<div class="t" style="left:854.40px;top:523.63px;font-size:10.60px;line-height:10.60px;color:#161616;transform:scaleX(1.0111);transform-origin:0 0;-webkit-text-stroke:0.2px #161616">smooth.</div>
<div class="a" style="left:1029px;top:570px;width:84px;height:22px;background:linear-gradient(#fdfdfd,#ececec);border:1px solid #a9a9a9;border-radius:2px"></div>
<div class="t" style="left:1056.00px;top:575.78px;font-size:11.60px;line-height:11.60px;color:#161616;transform:scaleX(1.0122);transform-origin:0 0;-webkit-text-stroke:0.2px #161616">Close</div>
<div class="a" style="left:1123px;top:570px;width:84px;height:22px;background:linear-gradient(#fdfdfd,#ececec);border:1px solid #a9a9a9;border-radius:2px"></div>
<div class="t" style="left:1151.50px;top:575.78px;font-size:11.60px;line-height:11.60px;color:#161616;transform:scaleX(0.9448);transform-origin:0 0;-webkit-text-stroke:0.2px #161616">Solve</div>
<div class="a" style="left:1143px;top:235px;width:70px;height:70px;border-radius:35px;mix-blend-mode:multiply;background:radial-gradient(circle,rgb(251,248,165) 0,rgb(251,248,168) 58%,rgba(251,248,170,0) 72%)"></div>
<svg class="a" style="left:1177px;top:270px" width="12" height="18" viewBox="0 0 12 18"><path d="M1.5 1.5V15L4.8 11.8L7.4 17.2L9.4 16.3L6.9 11H11Z" fill="#111" stroke="#f4f0b0" stroke-width=".6"/></svg>
<div class="a" style="left:0px;top:0px;width:65px;height:720px;background:#000"></div>
<div class="a" style="left:1215px;top:0px;width:65px;height:720px;background:#000"></div>
</body></html>
